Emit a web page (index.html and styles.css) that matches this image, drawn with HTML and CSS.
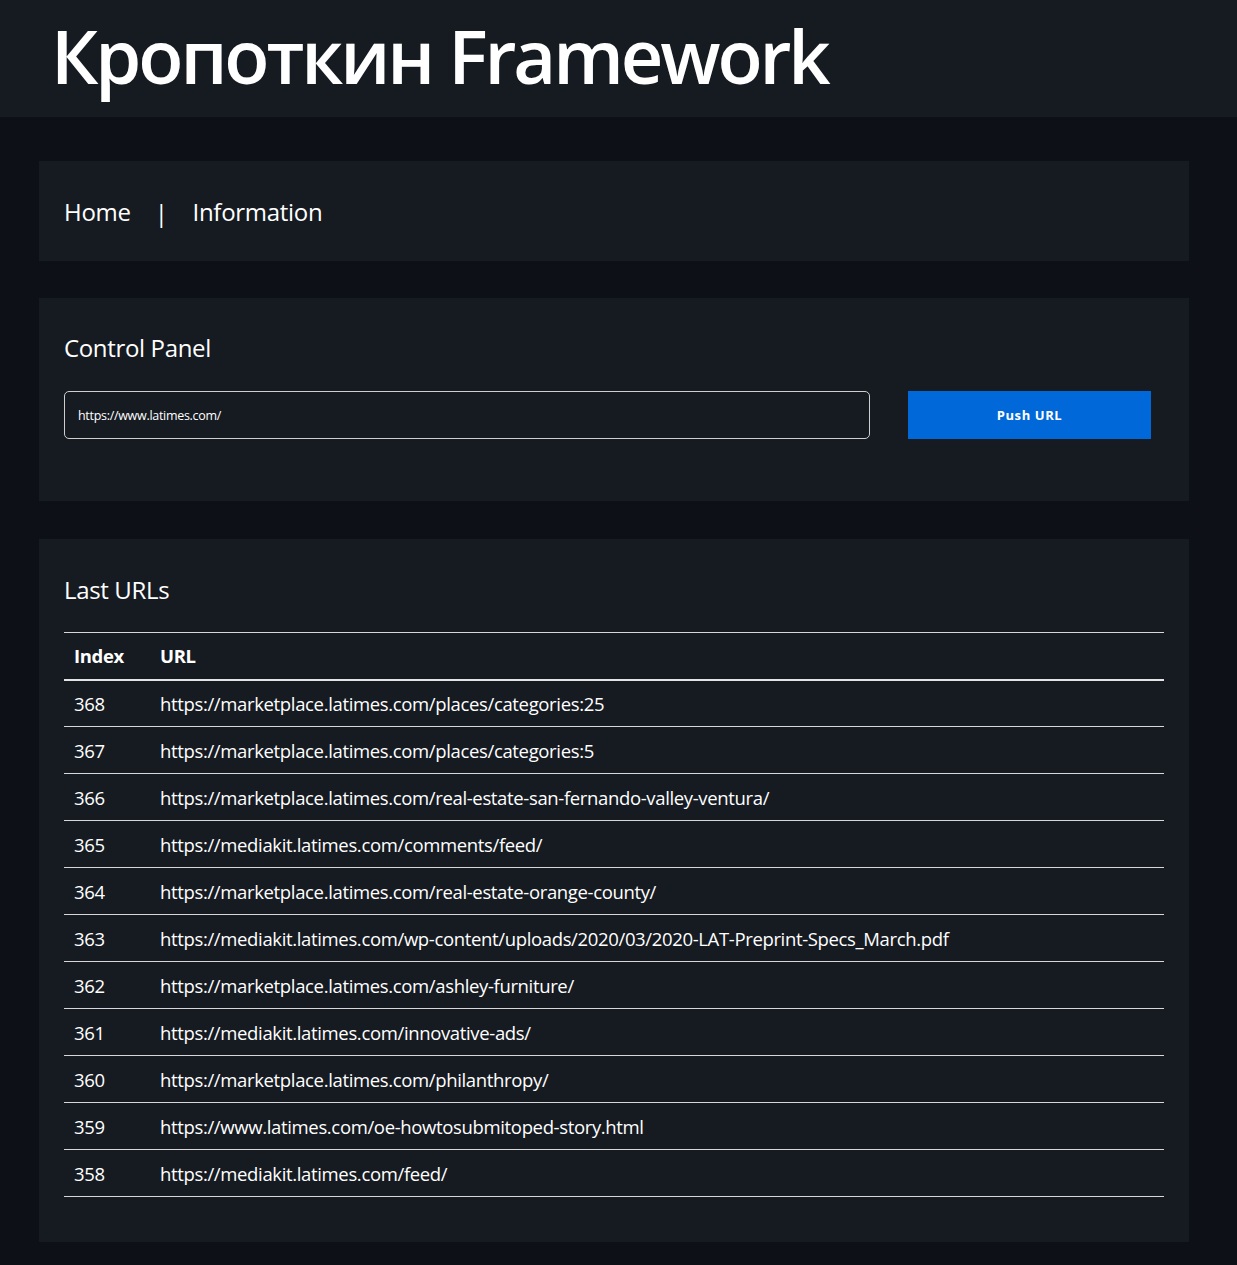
FILE: index.html
```html
<!DOCTYPE html>
<html lang="en">
<head>
<meta charset="utf-8">
<title>Кропоткин Framework</title>
<link rel="stylesheet" href="styles.css">
</head>
<body>
<header class="top">
  <h1 class="brand">Кропоткин Framework</h1>
</header>
<main class="page">
  <nav class="card nav">
    <a class="nav-link" href="#">Home</a>
    <span class="nav-sep">|</span>
    <a class="nav-link" href="#">Information</a>
  </nav>
  <section class="card panel">
    <h2 class="card-title">Control Panel</h2>
    <form class="push-form">
      <input class="url-input" type="text" value="https://www.latimes.com/">
      <button class="push-btn" type="button">Push URL</button>
    </form>
  </section>
  <section class="card urls">
    <h2 class="card-title">Last URLs</h2>
    <table class="url-table">
      <thead>
        <tr><th class="col-index">Index</th><th>URL</th></tr>
      </thead>
      <tbody>
        <tr><td>368</td><td>https://marketplace.latimes.com/places/categories:25</td></tr>
        <tr><td>367</td><td>https://marketplace.latimes.com/places/categories:5</td></tr>
        <tr><td>366</td><td>https://marketplace.latimes.com/real-estate-san-fernando-valley-ventura/</td></tr>
        <tr><td>365</td><td>https://mediakit.latimes.com/comments/feed/</td></tr>
        <tr><td>364</td><td>https://marketplace.latimes.com/real-estate-orange-county/</td></tr>
        <tr><td>363</td><td>https://mediakit.latimes.com/wp-content/uploads/2020/03/2020-LAT-Preprint-Specs_March.pdf</td></tr>
        <tr><td>362</td><td>https://marketplace.latimes.com/ashley-furniture/</td></tr>
        <tr><td>361</td><td>https://mediakit.latimes.com/innovative-ads/</td></tr>
        <tr><td>360</td><td>https://marketplace.latimes.com/philanthropy/</td></tr>
        <tr><td>359</td><td>https://www.latimes.com/oe-howtosubmitoped-story.html</td></tr>
        <tr><td>358</td><td>https://mediakit.latimes.com/feed/</td></tr>
      </tbody>
    </table>
  </section>
</main>
</body>
</html>
```
FILE: styles.css
```css
* { box-sizing: border-box; }
html, body { margin: 0; padding: 0; }
body {
  background: #0d1117;
  color: #ffffff;
  font-family: "Open Sans", "Noto Sans", sans-serif;
  min-height: 1265px;
}
.top {
  background: #161b22;
  height: 117px;
  padding-left: 51px;
}
.brand {
  margin: 0;
  font-size: 74px;
  font-weight: 600;
  line-height: 117px;
  letter-spacing: -3.1px;
  position: relative;
  top: -3px;
}
.page {
  padding: 44px 0 20px 39px;
}
.card {
  background: #161b22;
  width: 1150px;
  padding: 0 25px;
}
.nav {
  height: 100px;
  display: flex;
  align-items: center;
  margin-bottom: 37px;
  font-size: 24px;
  letter-spacing: -0.3px;
}
.nav-link { color: #fff; text-decoration: none; }
.nav-sep { margin: 0 25px 0 24px; position: relative; top: 1px; }
.card-title {
  margin: 0;
  font-size: 24px;
  font-weight: 400;
  line-height: 32px;
  letter-spacing: -0.35px;
}
.panel {
  height: 203px;
  padding-top: 34px;
  margin-bottom: 38px;
}
.push-form {
  display: flex;
  margin-top: 27px;
}
.url-input {
  width: 806px;
  height: 48px;
  background: #161b22;
  border: 1px solid #cfcfcf;
  border-radius: 5px;
  color: #fff;
  font-family: inherit;
  font-size: 12.5px;
  padding: 0 13px;
  letter-spacing: -0.3px;
}
.push-btn {
  margin-left: 38px;
  width: 243px;
  height: 48px;
  border: 0;
  background: #0068d8;
  color: #fff;
  font-family: inherit;
  font-size: 13px;
  font-weight: 700;
  letter-spacing: 0.6px;
}
.urls {
  padding-top: 35px;
  padding-bottom: 45px;
}
.urls .card-title { margin-bottom: 26px; }
.url-table {
  width: 100%;
  border-collapse: collapse;
  border-top: 1px solid #d8d8d8;
  font-size: 18.5px;
  letter-spacing: -0.35px;
}
.url-table th, .url-table td {
  text-align: left;
  padding: 0 10px;
  height: 47px;
  border-bottom: 1px solid #d8d8d8;
}
.url-table th {
  font-weight: 700;
  height: 47px;
  border-bottom: 2px solid #e4e4e4;
}
.col-index { width: 86px; }
```
